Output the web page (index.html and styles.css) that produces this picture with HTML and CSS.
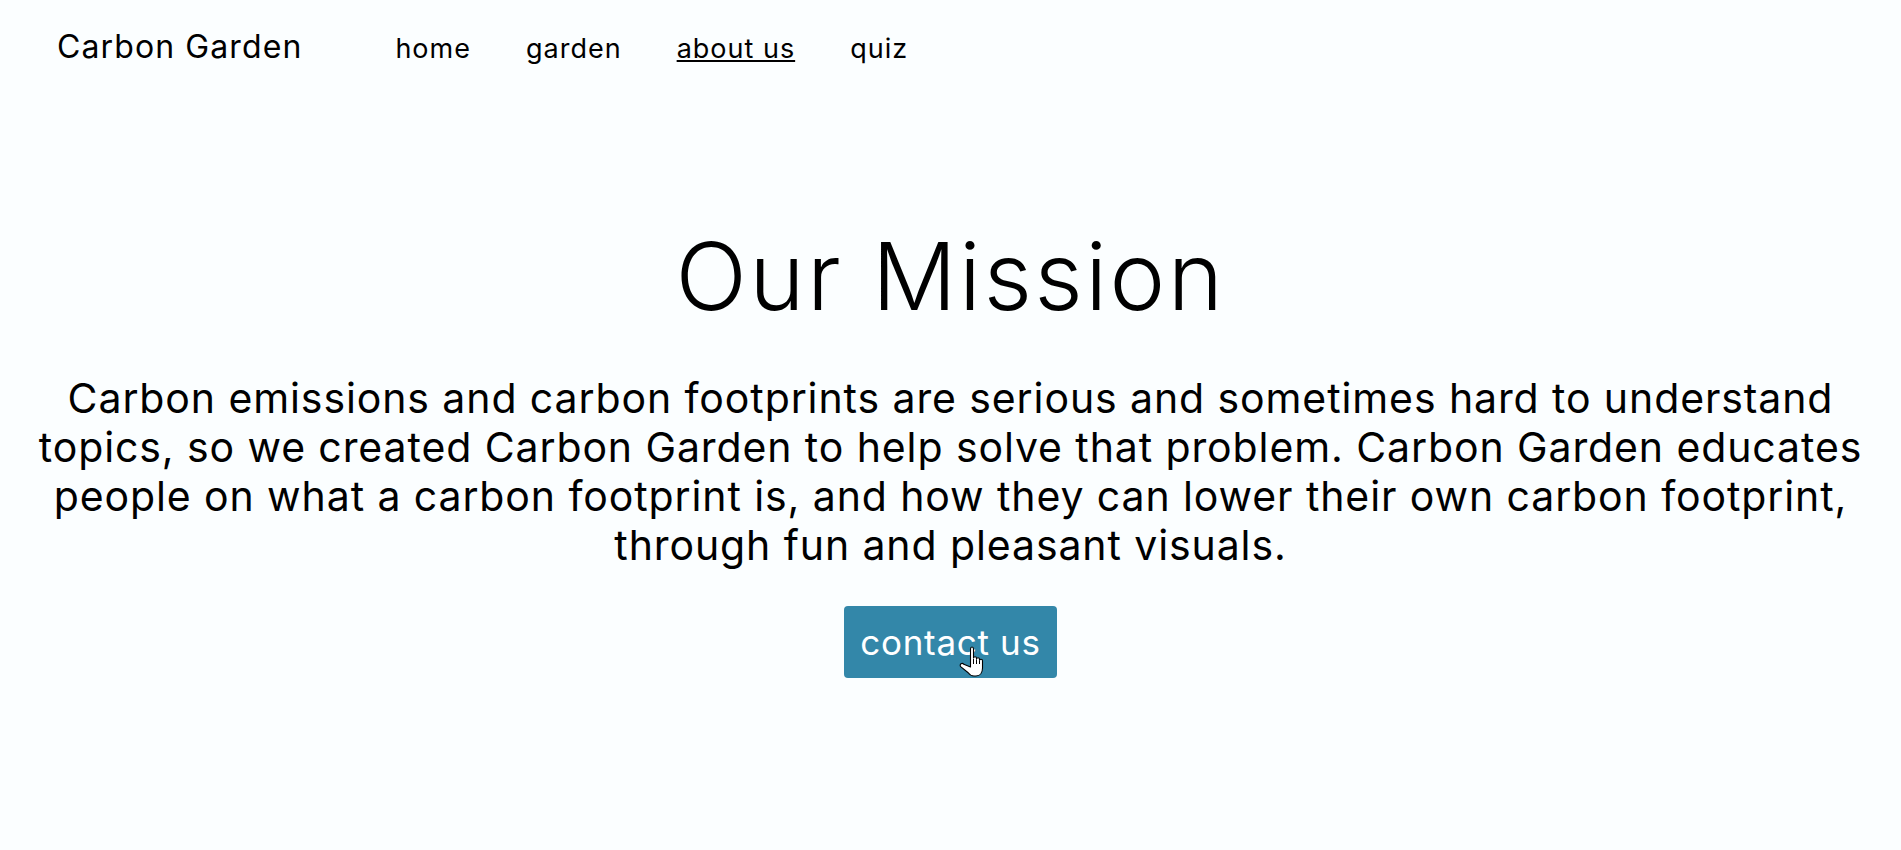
FILE: index.html
```html
<!DOCTYPE html>
<html lang="en">
<head>
<meta charset="utf-8">
<title>Carbon Garden - About Us</title>
<link rel="stylesheet" href="styles.css">
</head>
<body>
<header class="topbar">
  <a class="brand" href="#">Carbon Garden</a>
  <nav class="nav">
    <a class="nav-link" href="#">home</a>
    <a class="nav-link" href="#">garden</a>
    <a class="nav-link active" href="#">about us</a>
    <a class="nav-link" href="#">quiz</a>
  </nav>
</header>
<main class="mission">
  <h1 class="mission-title">Our Mission</h1>
  <p class="mission-text">Carbon emissions and carbon footprints are serious and sometimes hard to understand topics, so we created Carbon Garden to help solve that problem. Carbon Garden educates people on what a carbon footprint is, and how they can lower their own carbon footprint, through fun and pleasant visuals.</p>
  <div class="cta-wrap">
    <a class="cta" href="#">contact us</a>
    <svg class="cursor" width="25" height="31" viewBox="0 0 25 31" aria-hidden="true">
      <path d="M11.5 21V3c0-1.1.7-2 1.5-2s1.5.9 1.5 2V12c.2-.7.8-1.2 1.5-1.2s1.5.6 1.5 1.5v.7c.2-.7.8-1.2 1.5-1.2s1.5.6 1.5 1.5v1c.2-.6.8-1 1.5-1s1.5.6 1.5 1.5V22c0 4.6-2.5 8-6.5 8h-2c-2.6 0-4.4-1.1-5.8-3.2L1.6 20.6c-.7-1-.5-2.2.4-2.8.9-.6 2.1-.4 2.8.5z" fill="#fff" stroke="#000" stroke-width="1.1" stroke-linejoin="round"/>
      <path d="M14.5 13v5M17.5 13.5v4.5M20.5 14.5v3.5" stroke="#000" stroke-width="1" fill="none"/>
    </svg>
  </div>
</main>
</body>
</html>
```

FILE: styles.css
```css
* { box-sizing: border-box; }
html, body { margin: 0; padding: 0; }
body {
  background: #fbfeff;
  color: #000;
  font-family: Inter, "Open Sans", "DejaVu Sans", sans-serif;
  width: 1901px;
  height: 850px;
  overflow: hidden;
}
a { color: inherit; text-decoration: none; }

.topbar {
  display: flex;
  align-items: baseline;
  padding: 27px 0 0 57px;
  height: 70px;
}
.brand {
  font-size: 32px;
  letter-spacing: 1.1px;
  font-weight: 400;
}
.nav {
  display: flex;
  gap: 55px;
  margin-left: 93px;
}
.nav-link {
  font-size: 27px;
  letter-spacing: 1px;
}
.nav-link.active {
  text-decoration: underline;
  text-decoration-thickness: 2px;
  text-underline-offset: 2px;
}

.mission {
  display: flex;
  flex-direction: column;
  align-items: center;
  text-align: center;
  padding: 0 30px;
}
.mission-title {
  margin: 148px 0 0;
  font-size: 94px;
  font-weight: 300;
  line-height: 117px;
  letter-spacing: 2.4px;
}
.mission-text {
  margin: 39px 0 0;
  font-size: 41px;
  font-weight: 400;
  line-height: 49px;
  letter-spacing: 0.9px;
}
.cta-wrap {
  position: relative;
  margin-top: 36px;
}
.cta {
  display: block;
  background: #3387a9;
  color: #fff;
  border-radius: 4px;
  font-size: 35px;
  line-height: 72px;
  height: 72px;
  width: 213px;
  text-align: center;
  letter-spacing: 0.7px;
}
.cursor {
  position: absolute;
  left: 115px;
  top: 40px;
}
```
